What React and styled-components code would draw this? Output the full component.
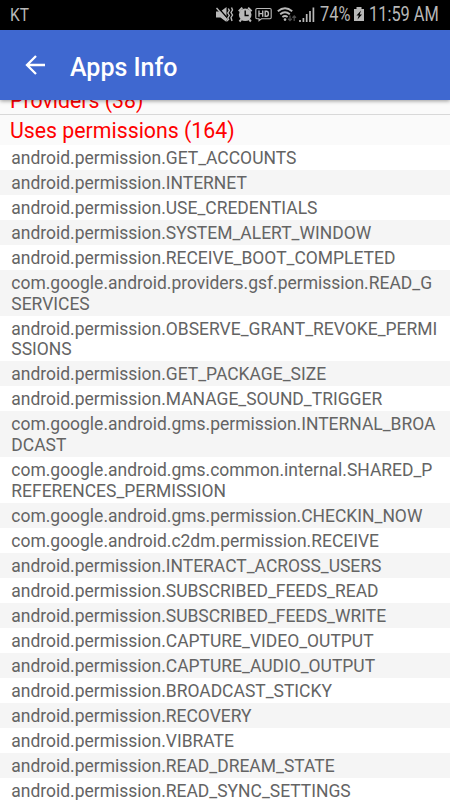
import React from 'react';
import styled, { createGlobalStyle } from 'styled-components';

const GlobalStyle = createGlobalStyle`
  body {
    margin: 0;
    background: #fff;
    font-family: Roboto, 'Liberation Sans', sans-serif;
  }
`

const Screen = styled.div`
  display: flex;
  flex-direction: column;
  width: 450px;
  height: 800px;
  overflow: hidden;
`

const StatusBar = styled.div`
  display: flex;
  flex: none;
  align-items: center;
  justify-content: space-between;
  height: 30px;
  padding: 0 11px 0 10px;
  box-sizing: border-box;
  background: #000;
  color: #b8b8b8;
`

const StatusGroup = styled.div`
  display: flex;
  align-items: center;
  height: 30px;
`

/* condensed system font of the status bar */
const StatusText = styled.span`
  width: ${props => props.$width}px;
  margin-left: ${props => props.$gap || 0}px;
  font-size: ${props => props.$size || 19.4}px;
  line-height: 30px;
  white-space: nowrap;
  transform: scaleX(0.845);
  transform-origin: left;
`

const Carrier = styled(StatusText)`
  height: 30px;
  line-height: 29px;
`

const StatusIcons = styled.svg`
  display: block;
  flex: none;
`

const Toolbar = styled.header`
  display: flex;
  flex: none;
  align-items: center;
  gap: 24px;
  height: 70px;
  padding-left: 25px;
  box-sizing: border-box;
  background: #3f68d0;
  color: #fff;
  box-shadow: 0 1px 4px rgba(0, 0, 0, 0.4);
  z-index: 1;
`

const Title = styled.h1`
  margin: 0;
  padding-top: 5px;
  font-size: 25px;
  font-weight: 500;
  line-height: 32px;
`

const Content = styled.main`
  display: flex;
  flex: 1;
  flex-direction: column;
  min-height: 0;
  overflow: hidden;
`

const Section = styled.h2`
  flex: none;
  height: 30px;
  margin: 0;
  padding-left: 10px;
  background: #fafafa;
  color: #f00;
  font-size: 21.3px;
  font-weight: 400;
  line-height: 32px;
`

/* only the bottom half of this one shows under the toolbar */
const ScrolledSection = styled(Section)`
  display: flex;
  align-items: flex-end;
  height: 15px;
  line-height: 26px;
  border-bottom: 1px solid #d8d8d8;
  box-sizing: border-box;
`

const List = styled.ul`
  margin: 0;
  padding: 0;
  list-style: none;
`

const Permission = styled.li`
  padding: 2.8px 10px 1.56px 11.3px;
  color: #646464;
  font-size: 17.48px;
  line-height: 20.67px;
  word-break: break-all;

  &:nth-child(even) {
    background: #f5f5f5;
  }
`

const permissions = [
  'android.permission.GET_ACCOUNTS',
  'android.permission.INTERNET',
  'android.permission.USE_CREDENTIALS',
  'android.permission.SYSTEM_ALERT_WINDOW',
  'android.permission.RECEIVE_BOOT_COMPLETED',
  'com.google.android.providers.gsf.permission.READ_GSERVICES',
  'android.permission.OBSERVE_GRANT_REVOKE_PERMISSIONS',
  'android.permission.GET_PACKAGE_SIZE',
  'android.permission.MANAGE_SOUND_TRIGGER',
  'com.google.android.gms.permission.INTERNAL_BROADCAST',
  'com.google.android.gms.common.internal.SHARED_PREFERENCES_PERMISSION',
  'com.google.android.gms.permission.CHECKIN_NOW',
  'com.google.android.c2dm.permission.RECEIVE',
  'android.permission.INTERACT_ACROSS_USERS',
  'android.permission.SUBSCRIBED_FEEDS_READ',
  'android.permission.SUBSCRIBED_FEEDS_WRITE',
  'android.permission.CAPTURE_VIDEO_OUTPUT',
  'android.permission.CAPTURE_AUDIO_OUTPUT',
  'android.permission.BROADCAST_STICKY',
  'android.permission.RECOVERY',
  'android.permission.VIBRATE',
  'android.permission.READ_DREAM_STATE',
  'android.permission.READ_SYNC_SETTINGS',
]

const MuteIcon = () => (
  <StatusIcons width="22" height="30" viewBox="0 0 22 30" fill="none">
    <path d="M0 11.500h4.500l6-4.500v15l-6-4.500H0z" fill="#b8b8b8" />
    <path d="M1.500 7l11.500 13" stroke="#000" strokeWidth="1.500" />
    <path d="M.5 8l11.500 13" stroke="#b8b8b8" strokeWidth="1.500" />
    <path d="M12.300 8.500l1 2-1.500 2.500 1.500 2.500-1.500 2.500 1 2M15.500 7.500l1 2.500-1.500 2.500 1.500 2.500-1.500 2.500 1 3.500" stroke="#b8b8b8" strokeWidth="1.400" />
  </StatusIcons>
)

const AlarmIcon = () => (
  <StatusIcons width="17" height="30" viewBox="0 0 17 30" fill="none">
    <circle cx="7.200" cy="14.800" r="6.300" fill="#b8b8b8" />
    <path d="M.8 11.300L4.300 7.600M13.600 11.300L10.100 7.600M3.200 19.500l-1.700 2M11.200 19.500l1.700 2" stroke="#b8b8b8" strokeWidth="2" />
    <path d="M7.200 10.500v5h3.500" stroke="#000" strokeWidth="1.400" />
  </StatusIcons>
)

const HdIcon = () => (
  <StatusIcons width="22" height="30" viewBox="0 0 22 30" fill="none" stroke="#b8b8b8">
    <path d="M2 8.500h13q1.200 0 1.200 1.200v7.800q0 1.200-1.200 1.200H6.500l-2.500 2v-2H2q-1.200 0-1.200-1.200V9.700q0-1.200 1.200-1.200z" strokeWidth="1.1" />
    <path d="M4 10.500v6.300M7.700 10.500v6.300M4 13.600h3.700M10.200 11.200v5h1.200q2 0 2-2.500t-2-2.500z" strokeWidth="1.400" />
  </StatusIcons>
)

const WifiIcon = () => (
  <StatusIcons width="22" height="30" viewBox="0 0 22 30" fill="none" stroke="#b8b8b8">
    <path d="M.8 11.200q7.200-6 14.400 0M3.200 14.200q4.800-4 9.600 0M5.400 17.100q2.600-2 5.200 0" strokeWidth="1.900" />
    <circle cx="8" cy="19.600" r="1.300" fill="#b8b8b8" stroke="none" />
    <path d="M13 15.500v5M11.200 18.700l1.800 1.800 1.800-1.800M17.200 21v-5M15.400 17.800l1.800-1.800 1.800 1.800" stroke="#4d4d4d" strokeWidth="1.300" />
  </StatusIcons>
)

const SignalIcon = () => (
  <StatusIcons width="17" height="30" viewBox="0 0 17 30" stroke="#b8b8b8" strokeWidth="1.700">
    <path d="M1 22v-2M4.400 22v-4M7.700 22v-8M11 22V11M14.400 22V7.500" />
  </StatusIcons>
)

const BatteryIcon = () => (
  <StatusIcons width="10" height="30" viewBox="0 0 10 30">
    <path d="M2.500 7h5v2H10v12H0V9h2.500z" fill="#b8b8b8" />
    <path d="M7 10.500l-4.500 5h2.300L3.500 19.500l4.500-5H5.700z" fill="#000" />
  </StatusIcons>
)

const BackIcon = () => (
  <svg width="21" height="20" viewBox="0 0 21 20" fill="none" stroke="#fff" strokeWidth="2.3">
    <path d="M20 10H2.500M11 1L2 10l9 9" />
  </svg>
)

const App = () => (
  <Screen>
    <GlobalStyle />
    <StatusBar>
      <Carrier $width={24} $size={18.4}>KT</Carrier>
      <StatusGroup>
        <MuteIcon />
        <AlarmIcon />
        <HdIcon />
        <WifiIcon />
        <SignalIcon />
        <StatusText $width={34} $gap={4}>74%</StatusText>
        <BatteryIcon />
        <StatusText $width={70} $gap={5}>11:59 AM</StatusText>
      </StatusGroup>
    </StatusBar>
    <Toolbar>
      <BackIcon />
      <Title>Apps Info</Title>
    </Toolbar>
    <Content>
      <ScrolledSection>Providers (38)</ScrolledSection>
      <Section>Uses permissions (164)</Section>
      <List>
        {permissions.map(permission => (
          <Permission key={permission}>{permission}</Permission>
        ))}
      </List>
    </Content>
  </Screen>
)

export default App;
